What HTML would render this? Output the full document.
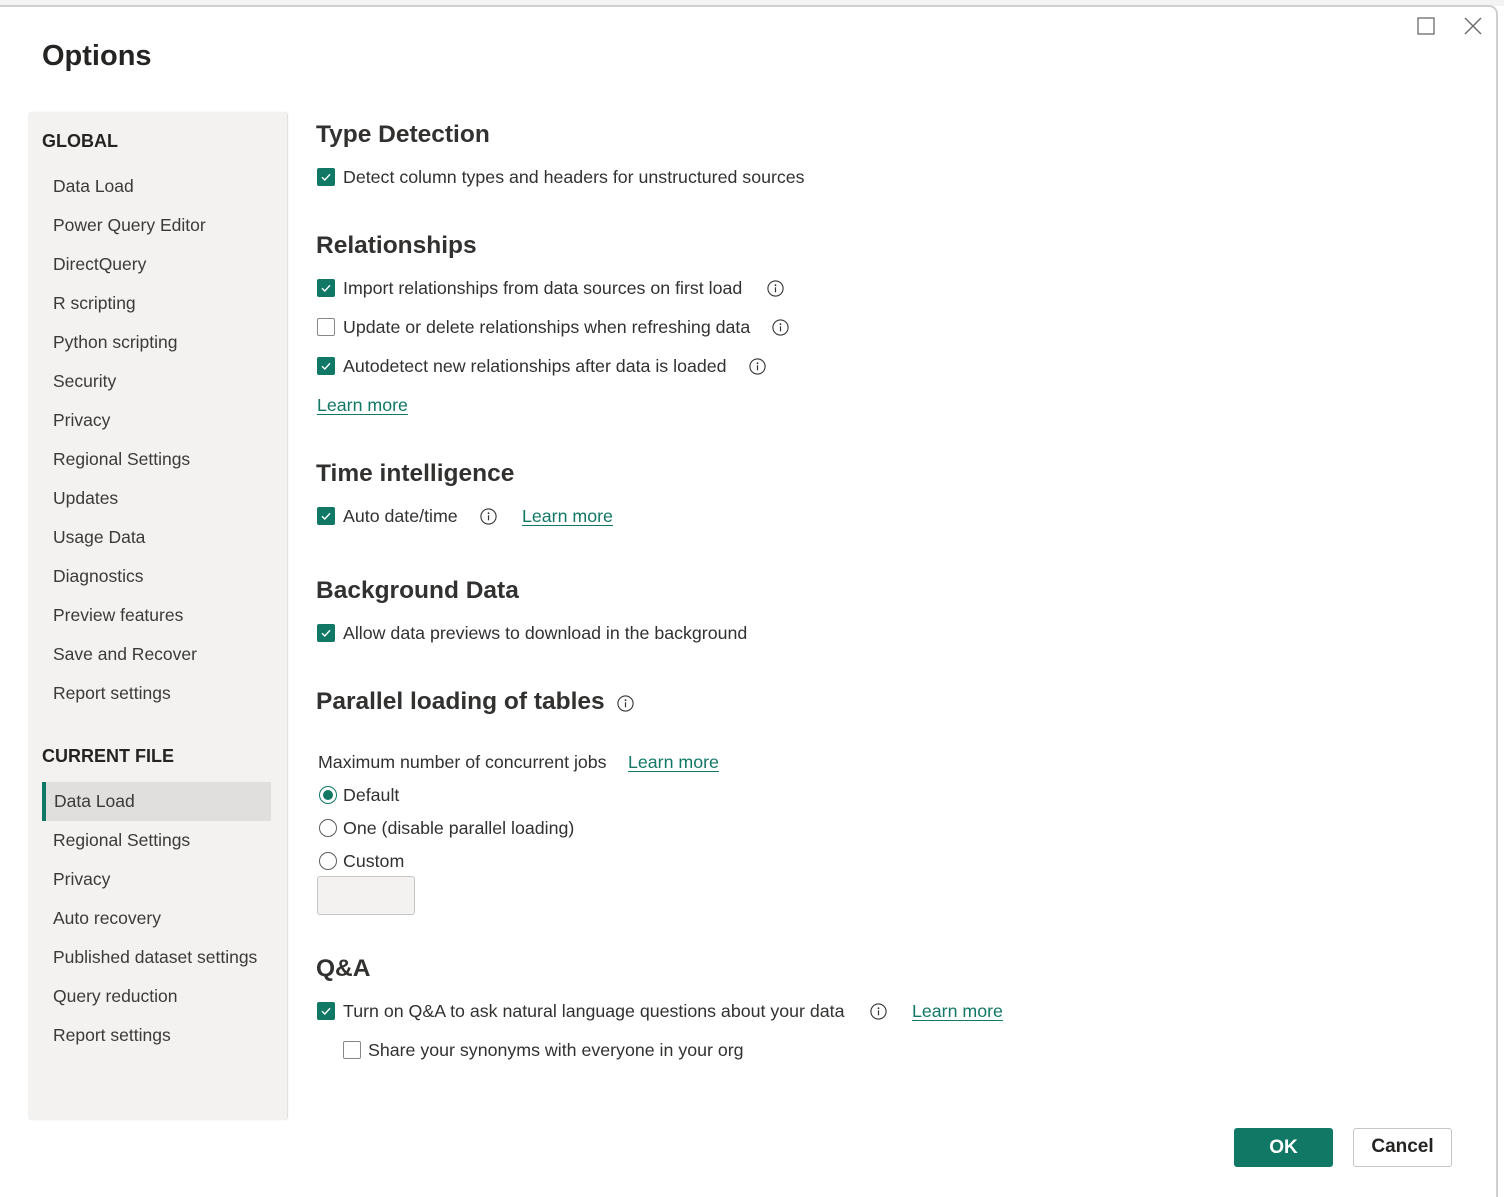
<!DOCTYPE html>
<html style="overflow:hidden;width:1504px;height:1197px"><head><meta charset="utf-8"><style>
*{margin:0;padding:0;box-sizing:border-box}
body{width:1504px;height:1197px;background:#fff;font-family:"Liberation Sans",sans-serif;color:#323130;position:relative;overflow:hidden}
.top{position:absolute;left:0;top:0;width:1504px;height:6px;background:#f3f3f3}
.win{position:absolute;left:-10px;top:5px;width:1508px;height:1192px;border:2px solid #cfcfcf;border-bottom:none;border-radius:9px 9px 0 0;background:#fff}
.t{position:absolute;line-height:22px;white-space:nowrap;font-size:17.8px;color:#323130}
.h{position:absolute;white-space:nowrap;font-size:24.5px;font-weight:bold;color:#323130;line-height:30px}
.side{position:absolute;left:28px;top:112px;width:259px;height:1008px;background:#f3f2f1;border-radius:3px;box-shadow:1px 0 1px #dcdcdc}
.sh{position:absolute;left:42px;font-size:18px;font-weight:bold;color:#252423;line-height:22px}
.si{position:absolute;left:53px;font-size:17.5px;color:#3b3a39;line-height:22px}
.cb{position:absolute;width:18px;height:18px;border-radius:2px;background:#117865}
.cb svg{position:absolute;left:3px;top:3px}
.cbe{position:absolute;width:18px;height:18px;border:1px solid #8a8886;border-radius:2px;background:#fff}
.inf{position:absolute;width:17px;height:17px}
a{color:#117865;text-decoration:underline;text-underline-offset:3px}
.rad{position:absolute;width:18px;height:18px;border:1.5px solid #605e5c;border-radius:50%;background:#fff}
</style></head><body>
<div class="top"></div>
<div class="win"></div>
<svg style="position:absolute;left:1417px;top:17px" width="18" height="18"><rect x="1" y="1" width="16" height="16" fill="none" stroke="#6a6a6a" stroke-width="1.3"/></svg>
<svg style="position:absolute;left:1463px;top:16px" width="20" height="20"><path d="M2 2L18 18M18 2L2 18" stroke="#6a6a6a" stroke-width="1.4"/></svg>
<div style="position:absolute;left:42px;top:38px;font-size:29px;font-weight:bold;color:#252423;line-height:36px">Options</div>

<div class="side"></div>
<div class="sh" style="top:130px">GLOBAL</div>
<div class="si" style="top:175px">Data Load</div>
<div class="si" style="top:214px">Power Query Editor</div>
<div class="si" style="top:253px">DirectQuery</div>
<div class="si" style="top:292px">R scripting</div>
<div class="si" style="top:331px">Python scripting</div>
<div class="si" style="top:370px">Security</div>
<div class="si" style="top:409px">Privacy</div>
<div class="si" style="top:448px">Regional Settings</div>
<div class="si" style="top:487px">Updates</div>
<div class="si" style="top:526px">Usage Data</div>
<div class="si" style="top:565px">Diagnostics</div>
<div class="si" style="top:604px">Preview features</div>
<div class="si" style="top:643px">Save and Recover</div>
<div class="si" style="top:682px">Report settings</div>
<div class="sh" style="top:745px">CURRENT FILE</div>
<div style="position:absolute;left:42px;top:782px;width:229px;height:39px;background:#e1dfdd;border-left:4px solid #117865"></div>
<div class="si" style="top:790px;left:54px">Data Load</div>
<div class="si" style="top:829px">Regional Settings</div>
<div class="si" style="top:868px">Privacy</div>
<div class="si" style="top:907px">Auto recovery</div>
<div class="si" style="top:946px">Published dataset settings</div>
<div class="si" style="top:985px">Query reduction</div>
<div class="si" style="top:1024px">Report settings</div>

<svg width="0" height="0" style="position:absolute"><defs>
<symbol id="ck" viewBox="0 0 12 12"><path d="M2 6.3L4.8 9L10 3.3" fill="none" stroke="#fff" stroke-width="1.4"/></symbol>
<symbol id="in" viewBox="0 0 17 17"><circle cx="8.5" cy="8.5" r="7.6" fill="none" stroke="#323130" stroke-width="1.1"/><circle cx="8.5" cy="5.2" r="0.9" fill="#323130"/><path d="M8.5 7.3V12.3" stroke="#323130" stroke-width="1.2"/></symbol>
</defs></svg>

<div class="h" style="left:316px;top:120px">Type Detection</div>
<div class="cb" style="left:317px;top:168px"><svg width="12" height="12"><use href="#ck"/></svg></div>
<div class="t" style="left:343px;top:166px">Detect column types and headers for unstructured sources</div>

<div class="h" style="left:316px;top:231px">Relationships</div>
<div class="cb" style="left:317px;top:279px"><svg width="12" height="12"><use href="#ck"/></svg></div>
<div class="t" style="left:343px;top:277px">Import relationships from data sources on first load</div>
<svg class="inf" style="left:767px;top:280px"><use href="#in"/></svg>
<div class="cbe" style="left:317px;top:318px"></div>
<div class="t" style="left:343px;top:316px">Update or delete relationships when refreshing data</div>
<svg class="inf" style="left:772px;top:319px"><use href="#in"/></svg>
<div class="cb" style="left:317px;top:357px"><svg width="12" height="12"><use href="#ck"/></svg></div>
<div class="t" style="left:343px;top:355px">Autodetect new relationships after data is loaded</div>
<svg class="inf" style="left:749px;top:358px"><use href="#in"/></svg>
<div class="t" style="left:317px;top:394px"><a>Learn more</a></div>

<div class="h" style="left:316px;top:459px">Time intelligence</div>
<div class="cb" style="left:317px;top:507px"><svg width="12" height="12"><use href="#ck"/></svg></div>
<div class="t" style="left:343px;top:505px">Auto date/time</div>
<svg class="inf" style="left:480px;top:508px"><use href="#in"/></svg>
<div class="t" style="left:522px;top:505px"><a>Learn more</a></div>

<div class="h" style="left:316px;top:576px">Background Data</div>
<div class="cb" style="left:317px;top:624px"><svg width="12" height="12"><use href="#ck"/></svg></div>
<div class="t" style="left:343px;top:622px">Allow data previews to download in the background</div>

<div class="h" style="left:316px;top:687px">Parallel loading of tables</div>
<svg class="inf" style="left:617px;top:695px"><use href="#in"/></svg>

<div class="t" style="left:318px;top:751px">Maximum number of concurrent jobs</div>
<div class="t" style="left:628px;top:751px"><a>Learn more</a></div>
<div class="rad" style="left:319px;top:786px;border-color:#117865"><div style="position:absolute;left:2.5px;top:2.5px;width:10px;height:10px;border-radius:50%;background:#117865"></div></div>
<div class="t" style="left:343px;top:784px">Default</div>
<div class="rad" style="left:319px;top:819px"></div>
<div class="t" style="left:343px;top:817px">One (disable parallel loading)</div>
<div class="rad" style="left:319px;top:852px"></div>
<div class="t" style="left:343px;top:850px">Custom</div>
<div style="position:absolute;left:317px;top:876px;width:98px;height:39px;background:#f3f2f1;border:1.5px solid #c8c6c4;border-radius:3px"></div>

<div class="h" style="left:316px;top:954px">Q&amp;A</div>
<div class="cb" style="left:317px;top:1002px"><svg width="12" height="12"><use href="#ck"/></svg></div>
<div class="t" style="left:343px;top:1000px">Turn on Q&amp;A to ask natural language questions about your data</div>
<svg class="inf" style="left:870px;top:1003px"><use href="#in"/></svg>
<div class="t" style="left:912px;top:1000px"><a>Learn more</a></div>
<div class="cbe" style="left:343px;top:1041px"></div>
<div class="t" style="left:368px;top:1039px">Share your synonyms with everyone in your org</div>

<div style="position:absolute;left:1234px;top:1128px;width:99px;height:39px;background:#117865;border-radius:3px;color:#fff;font-size:19px;font-weight:bold;text-align:center;line-height:39px">OK</div>
<div style="position:absolute;left:1353px;top:1128px;width:99px;height:39px;background:#fff;border:1.5px solid #c8c6c4;border-radius:3px;color:#252423;font-size:19px;font-weight:bold;text-align:center;line-height:36px">Cancel</div>
</body></html>
